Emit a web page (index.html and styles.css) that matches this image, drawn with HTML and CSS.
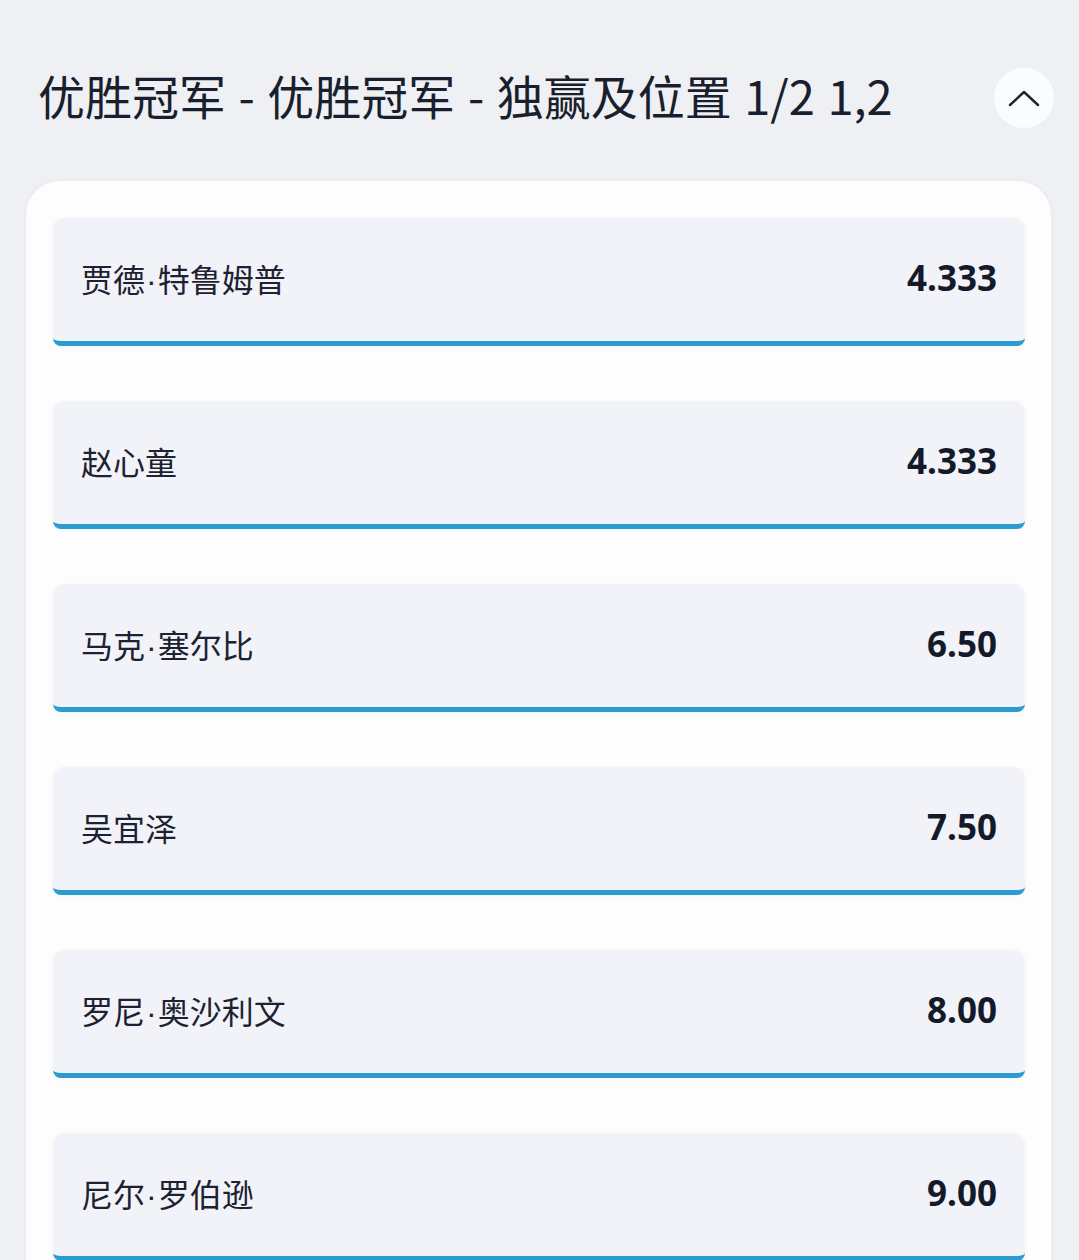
FILE: index.html
```html
<!DOCTYPE html>
<html lang="zh-CN">
  <head>
    <meta charset="UTF-8" />
    <meta name="viewport" content="width=device-width, initial-scale=1.0" />
    <title>优胜冠军</title>
    <link rel="stylesheet" href="styles.css">
  </head>
  <body>
    <div class="market-header">
      <h1 class="market-title">优胜冠军 - 优胜冠军 - 独赢及位置 1/2 1,2</h1>
      <button class="collapse-btn" aria-label="收起">
        <svg width="34" height="20" viewBox="0 0 34 20">
          <polyline points="3,17 17,4 31,17" fill="none" stroke="#1c2230" stroke-width="2.4" stroke-linecap="round" stroke-linejoin="round" />
        </svg>
      </button>
    </div>

    <div class="market-card">
      <div class="selection">
        <span class="selection-name">贾德<span class="dot">·</span>特鲁姆普</span>
        <span class="selection-odds">4.333</span>
      </div>
      <div class="selection">
        <span class="selection-name">赵心童</span>
        <span class="selection-odds">4.333</span>
      </div>
      <div class="selection">
        <span class="selection-name">马克<span class="dot">·</span>塞尔比</span>
        <span class="selection-odds">6.50</span>
      </div>
      <div class="selection">
        <span class="selection-name">吴宜泽</span>
        <span class="selection-odds">7.50</span>
      </div>
      <div class="selection">
        <span class="selection-name">罗尼<span class="dot">·</span>奥沙利文</span>
        <span class="selection-odds">8.00</span>
      </div>
      <div class="selection">
        <span class="selection-name">尼尔<span class="dot">·</span>罗伯逊</span>
        <span class="selection-odds">9.00</span>
      </div>
    </div>
  </body>
</html>
```

FILE: styles.css
```css
body {
  font-family: "Noto Sans CJK SC", "Noto Sans", sans-serif;
  background-color: #eef0f4;
  color: #1b2030;
  margin: 0;
  height: 1260px;
  overflow: hidden;
}
.market-header {
  display: flex;
  align-items: center;
  justify-content: space-between;
  padding: 68px 25px 0 38px;
  height: 60px;
  margin-bottom: 53px;
}
.market-title {
  margin: 0 0 6px;
  font-size: 47px;
  font-weight: 400;
  word-spacing: 2px;
  line-height: 60px;
  color: #1a1f2e;
}
.collapse-btn {
  width: 60px;
  height: 60px;
  border: none;
  border-radius: 50%;
  background-color: #fbfcfd;
  display: flex;
  align-items: center;
  justify-content: center;
  padding: 0;
  cursor: pointer;
}
.market-card {
  margin: 0 28px 0 26px;
  background-color: #fdfdfe;
  border-radius: 34px 34px 0 0;
  padding: 37px 26px 40px 27px;
  display: flex;
  flex-direction: column;
  gap: 55px;
  box-shadow: 0 0 6px rgba(0, 0, 0, 0.04);
}
.selection {
  display: flex;
  align-items: center;
  justify-content: space-between;
  height: 119px;
  padding: 0 28px 4px;
  background-color: #f1f3f8;
  border-radius: 12px 12px 8px 8px;
  border-bottom: 5px solid #2b9bd0;
  box-shadow: 0 1px 4px rgba(60, 70, 90, 0.05);
}
.selection-name {
  font-size: 32px;
  color: #1d2231;
}
.selection-name .dot {
  font-family: "Liberation Sans", sans-serif;
  margin: 0 1px;
}
.selection-odds {
  font-family: "Noto Sans", "Open Sans", sans-serif;
  font-size: 35px;
  font-weight: 700;
  color: #141a2a;
}
```
